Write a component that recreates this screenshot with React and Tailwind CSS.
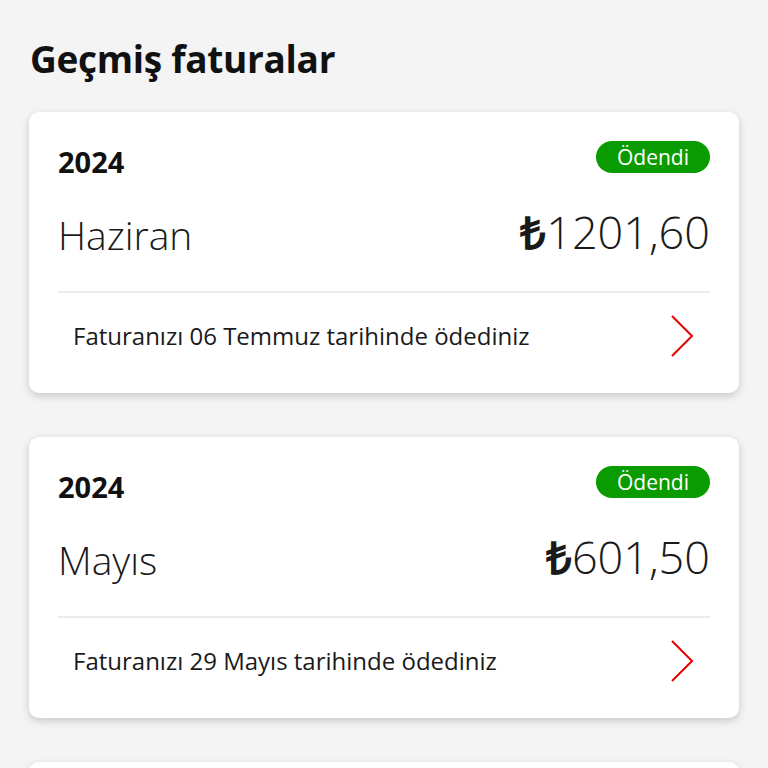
import React from "react";

const bills = [
  { year: "2024", month: "Haziran", amount: "1201,60", text: "Faturanızı 06 Temmuz tarihinde ödediniz" },
  { year: "2024", month: "Mayıs", amount: "601,50", text: "Faturanızı 29 Mayıs tarihinde ödediniz" },
];

function Card({ b }) {
  return (
    <div className="bg-white rounded-[10px] shadow-[0_3px_8px_rgba(0,0,0,0.18)] px-[29px] pt-[29px] h-[281px] shrink-0 flex flex-col">
      <div className="flex items-end justify-between h-[32px]">
        <div className="text-[29px] font-bold leading-none text-[#111] mb-[-3px]">{b.year}</div>
        <div className="bg-[#0a9b00] text-white rounded-full w-[114px] h-[32px] flex items-center justify-center text-[21px] leading-none">
          Ödendi
        </div>
      </div>
      <div className="flex items-center justify-between h-[80px] mt-[18px]">
        <div className="text-[39px] font-light text-[#1a1a1a] leading-none mt-[6px]">{b.month}</div>
        <div className="text-[45px] font-light text-[#1a1a1a] leading-none">
          <span className="font-bold">₺</span>{b.amount}
        </div>
      </div>
      <div className="h-[2px] bg-[#ebebeb] mt-[20px]" />
      <div className="flex items-center justify-between pl-[15px] pr-[16px] h-[86px]">
        <div className="text-[24px] text-[#1a1a1a] leading-none">{b.text}</div>
        <svg width="24" height="44" viewBox="0 0 24 44" fill="none">
          <path d="M2 2 L22 22 L2 42" stroke="#e60000" strokeWidth="2" strokeLinejoin="miter" />
        </svg>
      </div>
    </div>
  );
}

export default function App() {
  return (
    <div className="w-[768px] h-[768px] overflow-hidden bg-[#f4f4f4]" style={{ fontFamily: '"Open Sans", sans-serif' }}>
      <div className="px-[29px]">
        <h1 className="text-[37px] font-bold text-[#111] leading-none pt-[40px] pl-[1px] tracking-[-0.3px]">Geçmiş faturalar</h1>
        <div className="flex flex-col gap-[44px] mt-[35px]">
          {bills.map((b, i) => (
            <Card key={i} b={b} />
          ))}
          <div className="bg-white rounded-[10px] shadow-[0_3px_8px_rgba(0,0,0,0.18)] h-[281px] shrink-0" />
        </div>
      </div>
    </div>
  );
}
